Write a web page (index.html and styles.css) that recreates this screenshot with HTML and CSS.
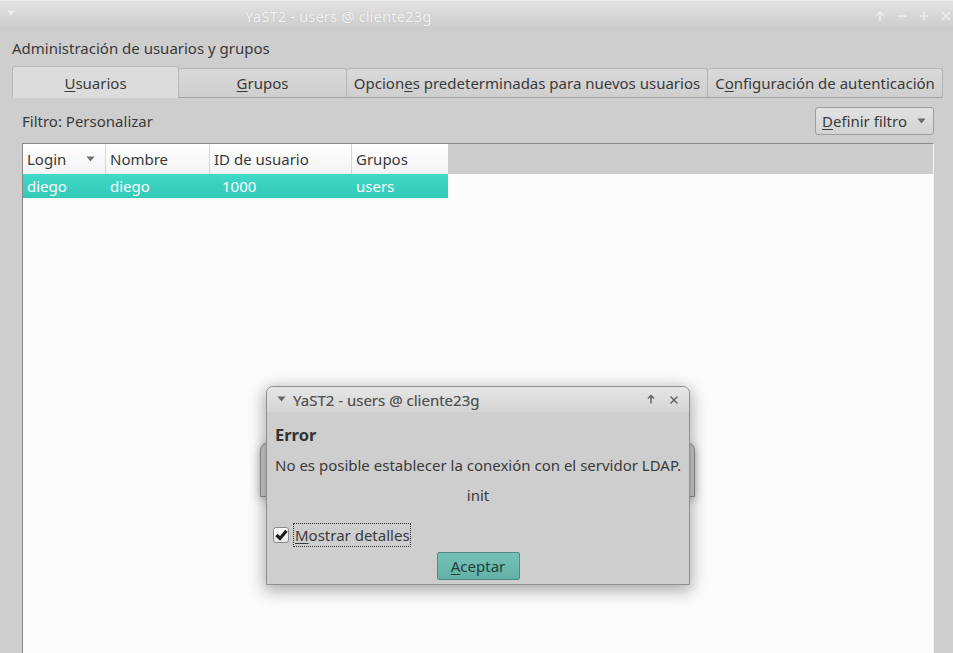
FILE: index.html
```html
<!DOCTYPE html>
<html lang="es">
<head>
<meta charset="utf-8">
<title>YaST2 - users @ cliente23g</title>
<link rel="stylesheet" href="styles.css">
</head>
<body>
<div class="window">
  <header class="titlebar">
    <svg class="wm-menu" width="10" height="6" viewBox="0 0 10 6"><path d="M1 0.5 L9 0.5 L5 5.5 Z" fill="#ececec"/></svg>
    <span class="wm-title">YaST2 - users @ cliente23g</span>
    <div class="wm-buttons">
      <svg width="12" height="12" viewBox="0 0 12 12"><path d="M6 11 V2 M2.5 5.5 L6 2 L9.5 5.5" stroke="#ececec" stroke-width="1.6" fill="none"/></svg>
      <svg width="12" height="12" viewBox="0 0 12 12"><path d="M1.5 6 H10.5" stroke="#ececec" stroke-width="1.6"/></svg>
      <svg width="12" height="12" viewBox="0 0 12 12"><path d="M1.5 6 H10.5 M6 1.5 V10.5" stroke="#ececec" stroke-width="1.6"/></svg>
      <svg width="12" height="12" viewBox="0 0 12 12"><path d="M2 2 L10 10 M10 2 L2 10" stroke="#ececec" stroke-width="1.6"/></svg>
    </div>
  </header>

  <main class="content">
    <h1 class="heading">Administración de usuarios y grupos</h1>
    <nav class="tabs">
      <div class="tab tab-active"><u>U</u>suarios</div>
      <div class="tab tab-fixed"><u>G</u>rupos</div>
      <div class="tab tab-auto">Opcion<u>e</u>s predeterminadas para nuevos usuarios</div>
      <div class="tab tab-last">C<u>o</u>nfiguración de autenticación</div>
    </nav>
    <section class="panel">
      <div class="filter-row">
        <span class="filter-label">Filtro: Personalizar</span>
        <button class="menu-btn"><span><u>D</u>efinir filtro</span>
          <svg width="9" height="6" viewBox="0 0 9 6"><path d="M0.5 0.5 H8.5 L4.5 5.5 Z" fill="#6a6a6a"/></svg>
        </button>
      </div>
      <div class="table">
        <div class="th">Login
          <svg class="sort" width="9" height="6" viewBox="0 0 9 6"><path d="M0.5 0.5 H8.5 L4.5 5.5 Z" fill="#707070"/></svg>
        </div>
        <div class="th">Nombre</div>
        <div class="th">ID de usuario</div>
        <div class="th">Grupos</div>
        <div class="th-fill"></div>
        <div class="td sel">diego</div>
        <div class="td sel">diego</div>
        <div class="td sel num">1000</div>
        <div class="td sel">users</div>
        <div class="td-fill"></div>
      </div>
    </section>
  </main>
</div>

<div class="busy-window"></div>

<div class="dialog">
  <header class="dlg-title">
    <svg width="9" height="6" viewBox="0 0 9 6"><path d="M0.5 0.5 H8.5 L4.5 5.5 Z" fill="#666"/></svg>
    <span class="dlg-title-text">YaST2 - users @ cliente23g</span>
    <div class="dlg-buttons">
      <svg width="10" height="10" viewBox="0 0 10 10"><path d="M5 9.5 V1.5 M2 4.5 L5 1.5 L8 4.5" stroke="#666" stroke-width="1.5" fill="none"/></svg>
      <svg width="10" height="10" viewBox="0 0 10 10"><path d="M1.5 1.5 L8.5 8.5 M8.5 1.5 L1.5 8.5" stroke="#666" stroke-width="1.5"/></svg>
    </div>
  </header>
  <div class="dlg-body">
    <h2 class="dlg-heading">Error</h2>
    <p class="dlg-msg">No es posible establecer la conexión con el servidor LDAP.</p>
    <p class="dlg-detail">init</p>
    <label class="check-row">
      <span class="checkbox">
        <svg width="13" height="12" viewBox="0 0 13 12"><path d="M1.5 6 L5 9.5 L11.5 1.8" stroke="#1e1e1e" stroke-width="3.2" fill="none"/></svg>
      </span>
      <span class="check-label"><u>M</u>ostrar detalles</span>
    </label>
    <div class="dlg-actions">
      <button class="ok-btn"><u>A</u>ceptar</button>
    </div>
  </div>
</div>
</body>
</html>
```

FILE: styles.css
```css
* { box-sizing: border-box; }

html, body {
  margin: 0;
  padding: 0;
  width: 953px;
  height: 653px;
  overflow: hidden;
}

body {
  background: #cecece;
  font-family: "Noto Sans", "Open Sans", sans-serif;
  font-size: 15px;
  color: #3a3a3a;
  position: relative;
}

u { text-decoration: underline; text-underline-offset: 2px; }

.window {
  display: flex;
  flex-direction: column;
  height: 653px;
}

/* window manager title bar */
.titlebar {
  height: 30px;
  flex: none;
  display: flex;
  align-items: center;
  background: linear-gradient(#e3e3e3, #cbcbcb);
  border-top: 1px solid #ededed;
  padding: 0 1px 0 4px;
}
.wm-menu { margin-top: -5px; margin-left: 2px; }
.wm-title {
  margin-left: 229px;
  color: #f3f3f3;
  font-size: 15px;
  text-shadow: 0 0 1px rgba(150,150,150,0.5);
}
.wm-buttons {
  margin-left: auto;
  display: flex;
  gap: 10px;
  align-items: center;
}

/* content */
.content {
  flex: 1;
  display: flex;
  flex-direction: column;
  padding: 0 10px 0 12px;
  min-height: 0;
}
.heading {
  margin: 8px 0 0 0;
  font-size: 15px;
  font-weight: normal;
  line-height: 20px;
  color: #3a3a3a;
}

.tabs {
  margin-top: 8px;
  display: flex;
  align-items: flex-end;
  height: 32px;
}
.tab {
  flex: none;
  height: 30px;
  line-height: 29px;
  padding: 0 8px;
  text-align: center;
  background: linear-gradient(#d9d9d9, #cfcfcf);
  border: 1px solid #b4b4b4;
  border-left: none;
  border-bottom-color: #a2a2a2;
  border-radius: 3px 3px 0 0;
  white-space: nowrap;
  color: #3a3a3a;
}
.tab-fixed { width: 168px; }
.tab-auto { width: 361px; padding: 0; }
.tab-last {
  flex: 1 1 auto;
  padding: 0;
  border-right: 1px solid #b4b4b4;
}
.tab-active {
  width: 167px;
  height: 32px;
  line-height: 32px;
  background: #dcdcdc;
  border: 1px solid #b8b8b8;
  border-bottom: none;
}

.panel {
  flex: 1;
  display: flex;
  flex-direction: column;
  padding: 9px 9px 0 10px;
  min-height: 0;
}

.filter-row {
  height: 28px;
  display: flex;
  align-items: center;
  justify-content: space-between;
}
.menu-btn {
  height: 28px;
  width: 119px;
  display: flex;
  align-items: center;
  justify-content: space-between;
  padding: 0 7px 0 6px;
  font: inherit;
  color: #3a3a3a;
  background: linear-gradient(#e2e2e2, #d3d3d3);
  border: 1px solid #9e9e9e;
  border-radius: 3px;
}

.table {
  margin-top: 8px;
  flex: 1;
  display: grid;
  grid-template-columns: 83px 104px 142px 96px 1fr;
  grid-template-rows: 30px 24px;
  align-content: start;
  background: #fcfcfc;
  border-top: 1px solid #8a8a8a;
  border-left: 1px solid #8a8a8a;
  border-right: 1px solid #f4f4f4;
}
.th {
  display: flex;
  align-items: center;
  padding: 0 4px;
  background: linear-gradient(#ffffff, #f3f3f3);
  border-right: 1px solid #d6d6d6;
  color: #3a3a3a;
  position: relative;
}
.th:nth-child(4) { border-right: none; }
.th .sort { position: absolute; right: 10px; top: 12px; }
.th-fill { background: #cdcdcd; }
.td {
  display: flex;
  align-items: center;
  padding: 0 4px;
  color: #ffffff;
}
.sel { background: linear-gradient(#41d9c8, #35c8b6); }
.num { padding-left: 12px; }
.td-fill { background: #fcfcfc; }

/* background busy popup behind dialog */
.busy-window {
  position: absolute;
  left: 260px;
  top: 443px;
  width: 435px;
  height: 54px;
  background: #cecece;
  border: 1px solid #8c8c8c;
  border-radius: 7px 7px 0 0;
  box-shadow: 0 2px 10px rgba(0,0,0,0.3);
}

/* error dialog */
.dialog {
  position: absolute;
  left: 266px;
  top: 386px;
  width: 424px;
  height: 199px;
  background: #cecece;
  border: 1px solid #8f8f8f;
  border-radius: 7px 7px 0 0;
  box-shadow: 0 4px 16px 2px rgba(0,0,0,0.32);
  display: flex;
  flex-direction: column;
}
.dlg-title {
  height: 25px;
  flex: none;
  display: flex;
  align-items: center;
  padding: 0 10px 0 10px;
  background: linear-gradient(#e6e6e6, #d4d4d4);
  border-radius: 6px 6px 0 0;
}
.dlg-title svg:first-child { margin-top: -2px; }
.dlg-title-text {
  margin-left: 7px;
  color: #555555;
  font-size: 15px;
  text-shadow: 0 0 0.5px rgba(60,60,60,0.6);
}
.dlg-buttons {
  margin-left: auto;
  display: flex;
  gap: 13px;
  align-items: center;
}

.dlg-body {
  flex: 1;
  display: flex;
  flex-direction: column;
  padding: 0 8px 0 8px;
}
.dlg-heading {
  margin: 12px 0 0 0;
  font-size: 16.5px;
  line-height: 22px;
  font-weight: bold;
  color: #333;
}
.dlg-msg {
  margin: 9px 0 0 0;
  line-height: 20px;
  color: #3a3a3a;
  white-space: nowrap;
}
.dlg-detail {
  margin: 10px 0 0 0;
  line-height: 20px;
  text-align: center;
}
.check-row {
  margin-top: 18px;
  margin-left: -2px;
  display: flex;
  align-items: center;
  gap: 4px;
}
.checkbox {
  width: 16px;
  height: 16px;
  border: 1px solid #8a8a8a;
  border-radius: 3px;
  background: linear-gradient(#ffffff, #e6e6e6);
  display: flex;
  align-items: center;
  justify-content: center;
}
.check-label {
  border: 1px dotted #333;
  height: 24px;
  line-height: 22px;
  padding: 0 0 0 1px;
  width: 118px;
  white-space: nowrap;
}
.dlg-actions {
  display: flex;
  justify-content: center;
  margin-top: 5px;
}
.ok-btn {
  width: 83px;
  height: 28px;
  font: inherit;
  color: #253f3b;
  background: linear-gradient(#75c1b7, #63b1a6);
  border: 1px solid #4b8b82;
  border-radius: 2px;
  padding: 0;
}
```
